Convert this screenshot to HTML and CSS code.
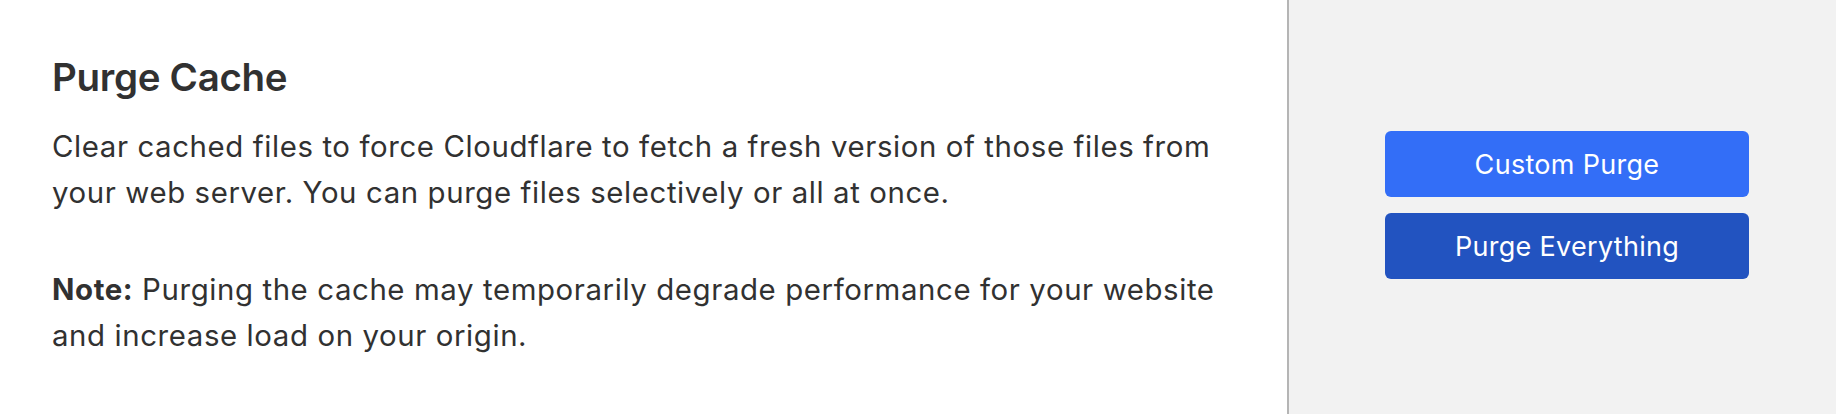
FILE: index.html
```html
<!DOCTYPE html>
<html lang="en">
<head>
<meta charset="utf-8">
<title>Purge Cache</title>
<link rel="stylesheet" href="styles.css">
</head>
<body>
<div class="card">
  <section class="main">
    <h2 class="title">Purge Cache</h2>
    <p class="text">Clear cached files to force Cloudflare to fetch a fresh version of those files from your web server. You can purge files selectively or all at once.</p>
    <p class="text note"><strong>Note:</strong> Purging the cache may temporarily degrade performance for your website and increase load on your origin.</p>
  </section>
  <aside class="side">
    <button class="btn btn-primary" type="button">Custom Purge</button>
    <button class="btn btn-dark" type="button">Purge Everything</button>
  </aside>
</div>
</body>
</html>
```

FILE: styles.css
```css
html, body {
  margin: 0;
  padding: 0;
  background: #ffffff;
}

body {
  font-family: Inter, "Noto Sans", "Liberation Sans", sans-serif;
  color: #313131;
}

.card {
  display: flex;
  height: 414px;
}

.main {
  width: 1287px;
  box-sizing: border-box;
  padding: 53px 45px 0 52px;
  background: #ffffff;
}

.title {
  margin: 0;
  font-size: 38.5px;
  line-height: 48px;
  font-weight: 600;
  letter-spacing: -0.3px;
}

.text {
  margin: 23px 0 0;
  font-size: 29.4px;
  line-height: 46px;
  font-weight: 400;
  letter-spacing: 0.6px;
}

.text.note {
  margin-top: 51px;
}

.text strong {
  font-weight: 700;
}

.side {
  flex: 1;
  display: flex;
  flex-direction: column;
  justify-content: center;
  gap: 16px;
  padding: 0 0 4px 96px;
  background: #f2f2f2;
  border-left: 2px solid #b5b5b5;
}

.btn {
  width: 364px;
  height: 66px;
  border: none;
  border-radius: 6px;
  color: #ffffff;
  font-family: Inter, "Noto Sans", "Liberation Sans", sans-serif;
  font-size: 27px;
  font-weight: 400;
  letter-spacing: 0.3px;
  cursor: pointer;
}

.btn-primary {
  background: #336ef7;
}

.btn-dark {
  background: #2253c0;
}
```
